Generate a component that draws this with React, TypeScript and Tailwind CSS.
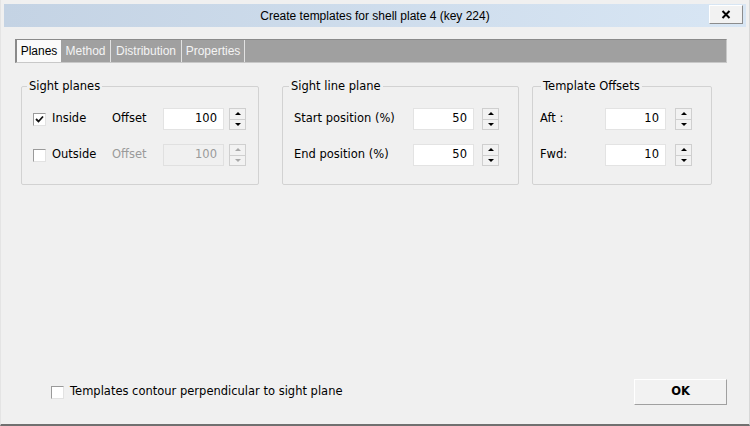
import React from 'react'

const uiFont = "font-['DejaVu_Sans',sans-serif] text-[11.5px] text-black"

function CheckBox({ checked }: { checked?: boolean }) {
    return (
        <span className="w-[13px] h-[13px] shrink-0 bg-white border border-t-[#9a9a9a] border-l-[#9a9a9a] border-b-[#e2e2e2] border-r-[#e2e2e2] flex items-center justify-center">
            {checked && (
                <svg width="9" height="9" viewBox="0 0 9 9">
                    <path d="M1 4 L3.5 6.5 L8 1.5" fill="none" stroke="#111" strokeWidth="1.8" />
                </svg>
            )}
        </span>
    )
}

function SpinButton({ disabled }: { disabled?: boolean }) {
    const arrowUp = disabled ? "border-b-[#a8a8a8]" : "border-b-black"
    const arrowDown = disabled ? "border-t-[#a8a8a8]" : "border-t-black"
    return (
        <div className="w-[17px] h-[22px] flex flex-col border border-[#cfcfcf] bg-[#f2f2f2]">
            <div className="flex-1 flex items-center justify-center border-b border-[#cfcfcf]">
                <span className={`w-0 h-0 border-x-[3px] border-x-transparent border-b-[3px] ${arrowUp}`} />
            </div>
            <div className="flex-1 flex items-center justify-center">
                <span className={`w-0 h-0 border-x-[3px] border-x-transparent border-t-[3px] ${arrowDown}`} />
            </div>
        </div>
    )
}

function NumberBox({ value, disabled }: { value: string; disabled?: boolean }) {
    return (
        <div className={`w-[61px] h-[22px] flex items-center justify-end pr-[6px] border ${disabled ? "bg-[#f0f0f0] border-[#e0e0e0] text-[#9a9a9a]" : "bg-white border-[#e3e3e3] text-black"}`}>
            {value}
        </div>
    )
}

function GroupBox({ title, width, titleOffset, children }: { title: string; width: string; titleOffset: string; children: React.ReactNode }) {
    return (
        <fieldset className={`${width} h-[105px] border border-[#d2d2d2] rounded-[2px] p-0`}>
            <legend className={`${titleOffset} px-[2px] leading-[13px]`}>{title}</legend>
            {children}
        </fieldset>
    )
}

export default function App() {
    const tabs = [
        { label: "Planes", w: "w-[44px]" },
        { label: "Method", w: "w-[50px]" },
        { label: "Distribution", w: "w-[71px]" },
        { label: "Properties", w: "w-[63px]" },
    ]

    return (
        <div className={`w-[750px] h-[426px] bg-[#f0f0f0] flex flex-col border-b-[2px] border-b-[#707070] border-r border-r-[#d8d8d8] border-l border-l-[#e4e4e4] ${uiFont}`}>
            {/* title bar */}
            <div className="mx-[3px] mt-[4px] h-[23px] bg-linear-to-r from-[#c4d3e4] to-[#d8e6f4] grid grid-cols-[1fr_auto_1fr]">
                <div />
                <div className="self-center font-['Liberation_Sans',Arial,sans-serif] text-[12px] text-black leading-none">
                    Create templates for shell plate 4 (key 224)
                </div>
                <div className="flex justify-end pt-[1px] pr-[3px]">
                    <button className="w-[34px] h-[19px] bg-[#f2f2f2] border border-t-white border-l-white border-b-[#8c8c8c] border-r-[#8c8c8c] flex items-center justify-center">
                        <svg width="10" height="9" viewBox="0 0 10 9">
                            <path d="M1.5 1 L8.5 8 M8.5 1 L1.5 8" stroke="#000" strokeWidth="2" />
                        </svg>
                    </button>
                </div>
            </div>

            {/* tab strip */}
            <div className="ml-[14px] mt-[12px] w-[712px] h-[24px] bg-[#a0a0a0] border-t border-l-[2px] border-t-[#8a8a8a] border-l-[#8a8a8a] border-b border-r border-b-[#c8c8c8] border-r-[#c8c8c8] flex items-end font-['Liberation_Sans',Arial,sans-serif] text-[12px]">
                {tabs.map((t, i) => (
                    <div
                        key={t.label}
                        className={`${t.w} h-[22px] flex items-center justify-center ${i === 0 ? "bg-[#fafafa] text-black" : "text-[#f4f4f4] border-r border-[#e2e2e2]"}`}
                    >
                        {t.label}
                    </div>
                ))}
            </div>

            {/* group boxes */}
            <div className="flex mt-[17px]">
                <div className="ml-[20px]">
                    <GroupBox title="Sight planes" width="w-[238px]" titleOffset="ml-[5px]">
                        <div className="pl-[11px] pt-[15px] flex flex-col gap-[14px]">
                            <div className="flex items-center h-[22px]">
                                <div className="w-[79px] flex items-center gap-[6px]">
                                    <CheckBox checked />
                                    <span>Inside</span>
                                </div>
                                <span className="w-[51px]">Offset</span>
                                <NumberBox value="100" />
                                <div className="ml-[5px]"><SpinButton /></div>
                            </div>
                            <div className="flex items-center h-[22px]">
                                <div className="w-[79px] flex items-center gap-[6px]">
                                    <CheckBox />
                                    <span>Outside</span>
                                </div>
                                <span className="w-[51px] text-[#9a9a9a]">Offset</span>
                                <NumberBox value="100" disabled />
                                <div className="ml-[5px]"><SpinButton disabled /></div>
                            </div>
                        </div>
                    </GroupBox>
                </div>

                <div className="ml-[23px]">
                    <GroupBox title="Sight line plane" width="w-[237px]" titleOffset="ml-[6px]">
                        <div className="pl-[11px] pt-[15px] flex flex-col gap-[14px]">
                            <div className="flex items-center h-[22px]">
                                <span className="w-[119px]">Start position (%)</span>
                                <NumberBox value="50" />
                                <div className="ml-[8px]"><SpinButton /></div>
                            </div>
                            <div className="flex items-center h-[22px]">
                                <span className="w-[119px]">End position (%)</span>
                                <NumberBox value="50" />
                                <div className="ml-[8px]"><SpinButton /></div>
                            </div>
                        </div>
                    </GroupBox>
                </div>

                <div className="ml-[13px]">
                    <GroupBox title="Template Offsets" width="w-[180px]" titleOffset="ml-[8px]">
                        <div className="pl-[7px] pt-[15px] flex flex-col gap-[14px]">
                            <div className="flex items-center h-[22px]">
                                <span className="w-[65px]">Aft :</span>
                                <NumberBox value="10" />
                                <div className="ml-[9px]"><SpinButton /></div>
                            </div>
                            <div className="flex items-center h-[22px]">
                                <span className="w-[65px]">Fwd:</span>
                                <NumberBox value="10" />
                                <div className="ml-[9px]"><SpinButton /></div>
                            </div>
                        </div>
                    </GroupBox>
                </div>
            </div>

            <div className="flex-1" />

            {/* bottom row */}
            <div className="flex items-center pl-[50px] pr-[22px] pb-[19px]">
                <CheckBox />
                <span className="ml-[6px]">Templates contour perpendicular to sight plane</span>
                <div className="flex-1" />
                <button className="w-[93px] h-[26px] bg-[#f2f2f2] border border-t-white border-l-white border-b-[#a0a0a0] border-r-[#a0a0a0] font-bold text-[11.5px]">
                    OK
                </button>
            </div>
        </div>
    )
}
